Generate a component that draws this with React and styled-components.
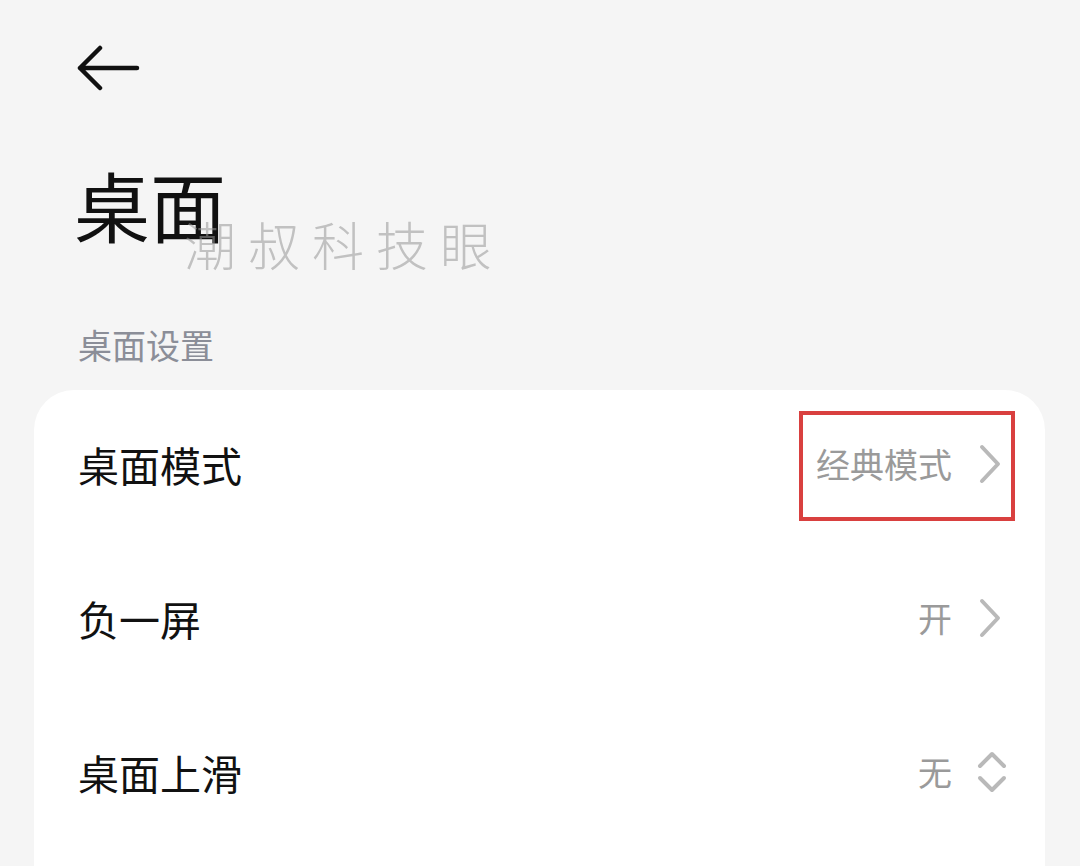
import React from "react";
import styled, { createGlobalStyle } from "styled-components";

const GlobalStyle = createGlobalStyle`
  html, body {
    margin: 0;
    padding: 0;
    background: #f5f5f5;
  }
  body {
    font-family: "Noto Sans CJK SC", "Noto Sans", sans-serif;
    overflow: hidden;
  }
`;

const rows = [
  { label: "桌面模式", value: "经典模式", icon: "chevron", boxed: true },
  { label: "负一屏", value: "开", icon: "chevron" },
  { label: "桌面上滑", value: "无", icon: "updown" },
];

function Chevron() {
  return (
    <svg width="24" height="40" viewBox="0 0 24 40" fill="none">
      <path d="M4 3 L20 20 L4 37" stroke="#b9b9b9" strokeWidth="4" strokeLinecap="round" strokeLinejoin="round" />
    </svg>
  );
}

function UpDown() {
  return (
    <svg width="32" height="46" viewBox="0 0 32 46" fill="none">
      <path d="M4 17 L16 5 L28 17" stroke="#b9b9b9" strokeWidth="4" strokeLinecap="round" strokeLinejoin="round" />
      <path d="M4 29 L16 41 L28 29" stroke="#b9b9b9" strokeWidth="4" strokeLinecap="round" strokeLinejoin="round" />
    </svg>
  );
}

export default function App() {
  return (
    <Page>
      <GlobalStyle />
      <TopBar>
        <BackButton>
          <svg width="66" height="48" viewBox="0 0 66 48" fill="none">
            <path d="M62 23 L5 23 M25 3 L5 23 L25 43" stroke="#111" strokeWidth="4.5" strokeLinecap="round" strokeLinejoin="round" />
          </svg>
        </BackButton>
      </TopBar>
      <TitleBlock>
        <Title>桌面</Title>
        <Watermark>潮叔科技眼</Watermark>
      </TitleBlock>
      <SectionLabel>桌面设置</SectionLabel>
      <Card>
        {rows.map((r) => (
          <Row key={r.label}>
            <Label>{r.label}</Label>
            <ValueGroup $boxed={r.boxed} $wide={r.icon === "updown"}>
              <Value>{r.value}</Value>
              {r.icon === "chevron" ? <Chevron /> : <UpDown />}
            </ValueGroup>
          </Row>
        ))}
      </Card>
    </Page>
  );
}

const Page = styled.div`
  width: 1080px;
  height: 866px;
  overflow: hidden;
  box-sizing: border-box;
  padding: 0 34px;
`;

const TopBar = styled.div`
  height: 136px;
  display: flex;
  align-items: center;
  padding-left: 41px;
`;

const BackButton = styled.div`
  display: flex;
  align-items: center;
  margin-top: 2px;
`;

const TitleBlock = styled.div`
  position: relative;
  padding-left: 40px;
  height: 150px;
`;

const Title = styled.h1`
  margin: 0;
  padding-top: 30px;
  font-size: 76px;
  font-weight: 400;
  line-height: 1;
  color: #111;
`;

const Watermark = styled.div`
  position: absolute;
  left: 150px;
  top: 82px;
  font-size: 52px;
  line-height: 1;
  letter-spacing: 12px;
  font-weight: 300;
  color: rgba(150, 150, 150, 0.55);
`;

const SectionLabel = styled.div`
  padding-left: 44px;
  font-size: 34px;
  line-height: 1;
  color: #8b8e98;
  height: 104px;
  box-sizing: border-box;
  padding-top: 42px;
`;

const Card = styled.div`
  background: #fff;
  border-radius: 40px;
  width: 1011px;
  padding: 0 43px 0 44px;
  box-sizing: border-box;
  height: 620px;
`;

const Row = styled.div`
  height: 154px;
  box-sizing: border-box;
  padding-bottom: 6px;
  display: flex;
  align-items: center;
  justify-content: space-between;
`;

const Label = styled.div`
  font-size: 41px;
  line-height: 1;
  color: #111;
`;

const ValueGroup = styled.div`
  display: flex;
  align-items: center;
  gap: ${(p) => (p.$wide ? "24px" : "26px")};
  margin-right: ${(p) => (p.$wide ? "-6px" : "0")};
  position: relative;
  &::after {
    content: "";
    display: ${(p) => (p.$boxed ? "block" : "none")};
    position: absolute;
    left: -17px;
    right: -13px;
    top: -33px;
    bottom: -37px;
    border: 4px solid #d9403f;
  }
`;

const Value = styled.div`
  font-size: 34px;
  line-height: 1;
  color: #9a9a9a;
`;
